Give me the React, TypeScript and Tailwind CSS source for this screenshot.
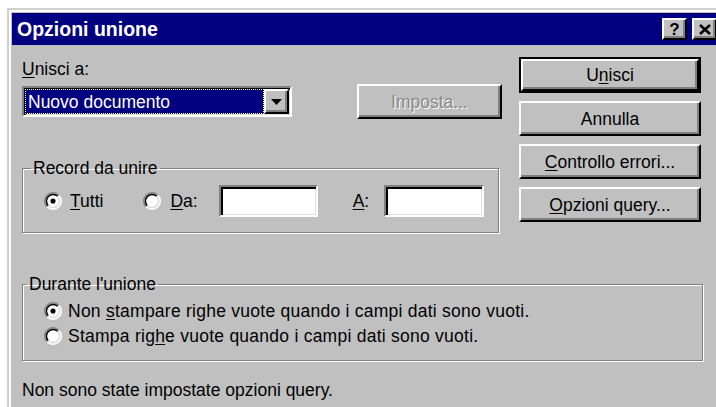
import React from 'react';

// Win95 style "Opzioni unione" dialog (merge options)

const raised =
  'border-2 border-t-white border-l-white border-r-black border-b-black bg-[#c0c0c0] shadow-[inset_-2px_-2px_0_#808080]';
const sunken =
  'border-2 border-t-[#808080] border-l-[#808080] border-r-white border-b-white shadow-[inset_2px_2px_0_#000,inset_-1px_-1px_0_#dfdfdf]';
const etched = 'border border-[#808080] shadow-[1px_1px_0_#fff,inset_1px_1px_0_#fff]';

function Radio({ checked = false }: { checked?: boolean }) {
  return (
    <svg width="18" height="18" viewBox="0 0 12 12" className="shrink-0">
      <circle cx="6" cy="6" r="5" fill="#fff" />
      <path d="M2.11 9.89 A5.5 5.5 0 0 1 9.89 2.11" fill="none" stroke="#808080" strokeWidth="1" />
      <path d="M9.89 2.11 A5.5 5.5 0 0 1 2.11 9.89" fill="none" stroke="#fff" strokeWidth="1" />
      <path d="M2.82 9.18 A4.5 4.5 0 0 1 9.18 2.82" fill="none" stroke="#000" strokeWidth="1" />
      <path d="M9.18 2.82 A4.5 4.5 0 0 1 2.82 9.18" fill="none" stroke="#dfdfdf" strokeWidth="1" />
      {checked && <circle cx="6" cy="6" r="1.7" fill="#000" />}
    </svg>
  );
}

function DialogButton({ children, isDefault = false }: { children: React.ReactNode; isDefault?: boolean }) {
  if (isDefault) {
    return (
      <div className="h-[36px] border-2 border-black">
        <div className={`${raised} flex h-full items-center justify-center`}>{children}</div>
      </div>
    );
  }
  return <div className={`${raised} flex h-[35px] items-center justify-center`}>{children}</div>;
}

export default function App() {
  return (
    <div className="h-[407px] w-[716px] overflow-hidden bg-white pl-[7px] pt-[8px] font-['Liberation_Sans',Arial,sans-serif] text-[17.5px] leading-[20px] text-black">
      <div className="w-[714px] border-l-2 border-t-2 border-[#cfcfcf]">
        <div className="h-[400px] border-l-2 border-t-2 border-white bg-[#c0c0c0] pl-px pt-px">
          {/* title bar */}
          <div className="flex h-[32px] items-center bg-[#000080] pl-[5px] pr-[4px]">
            <span className="text-[19.5px] font-bold text-white">Opzioni unione</span>
            <div className="ml-auto flex gap-[5px]">
              <div className={`${raised} flex h-[22px] w-[25px] items-center justify-center text-[17px] font-bold leading-none`}>
                ?
              </div>
              <div className={`${raised} flex h-[22px] w-[25px] items-center justify-center`}>
                <svg width="12" height="11" viewBox="0 0 12 11">
                  <path d="M1 1 L11 10 M11 1 L1 10" stroke="#000" strokeWidth="2.6" />
                </svg>
              </div>
            </div>
          </div>

          <div className="pl-[10px] pt-[14px]">
            <div className="flex">
              {/* left column */}
              <div className="w-[480px]">
                <div>
                  <span className="underline underline-offset-2">U</span>nisci a:
                </div>
                <div className="mt-[5px] flex h-[35px] items-center justify-between">
                  <div className={`${sunken} flex h-[31px] w-[270px] items-center pl-[1px] pr-[1px] pt-[1px] pb-px`}>
                    <div className="flex h-[25px] flex-1 items-center border border-dotted border-[#ffff80] bg-[#000080] pl-[2px] text-white">
                      Nuovo documento
                    </div>
                    <div className={`${raised} flex h-[25px] w-[25px] items-center justify-center`}>
                      <svg width="11" height="6" viewBox="0 0 11 6">
                        <path d="M0 0 H11 L5.5 6 Z" fill="#000" />
                      </svg>
                    </div>
                  </div>
                  <div className={`${raised} flex h-[35px] w-[145px] items-center justify-center text-[#8a8a8a] [text-shadow:1px_1px_0_#fff]`}>
                    Imposta...
                  </div>
                </div>

                <fieldset className={`${etched} mt-[39px] w-[477px] pb-[15px] pl-[21px] pt-[7px]`}>
                  <legend className="ml-[-13px] px-[2px]">Record da unire</legend>
                  <div className="flex h-[32px] items-center">
                    <Radio checked />
                    <span className="ml-[8px]">
                      <span className="underline underline-offset-2">T</span>utti
                    </span>
                    <span className="ml-[40px]">
                      <Radio />
                    </span>
                    <span className="ml-[9px]">
                      <span className="underline underline-offset-2">D</span>a:
                    </span>
                    <div className={`${sunken} ml-[21px] h-[32px] w-[99px] bg-white`} />
                    <span className="ml-[35px]">
                      <span className="underline underline-offset-2">A</span>:
                    </span>
                    <div className={`${sunken} ml-[15px] h-[32px] w-[100px] bg-white`} />
                  </div>
                </fieldset>
              </div>

              {/* right column buttons */}
              <div className="ml-[17px] mt-[-2px] flex w-[182px] flex-col gap-[8px]">
                <DialogButton isDefault>
                  <span>
                    U<span className="underline underline-offset-2">n</span>isci
                  </span>
                </DialogButton>
                <DialogButton>Annulla</DialogButton>
                <DialogButton>
                  <span>
                    <span className="underline underline-offset-2">C</span>ontrollo errori...
                  </span>
                </DialogButton>
                <DialogButton>
                  <span>
                    <span className="underline underline-offset-2">O</span>pzioni query...
                  </span>
                </DialogButton>
              </div>
            </div>

            <fieldset className={`${etched} mt-[41px] w-[681px] pb-[12px] pl-[21px] pt-[4px]`}>
              <legend className="ml-[-17px] px-[2px]">Durante l'unione</legend>
              <div className="flex h-[25px] items-center">
                <Radio checked />
                <span className="ml-[6px] tracking-[0.25px]">
                  Non <span className="underline underline-offset-2">s</span>tampare righe vuote quando i campi dati sono vuoti.
                </span>
              </div>
              <div className="flex h-[25px] items-center">
                <Radio />
                <span className="ml-[6px] tracking-[0.25px]">
                  Stampa rig<span className="underline underline-offset-2">h</span>e vuote quando i campi dati sono vuoti.
                </span>
              </div>
            </fieldset>

            <div className="mt-[19px]">Non sono state impostate opzioni query.</div>
          </div>
        </div>
      </div>
    </div>
  );
}
